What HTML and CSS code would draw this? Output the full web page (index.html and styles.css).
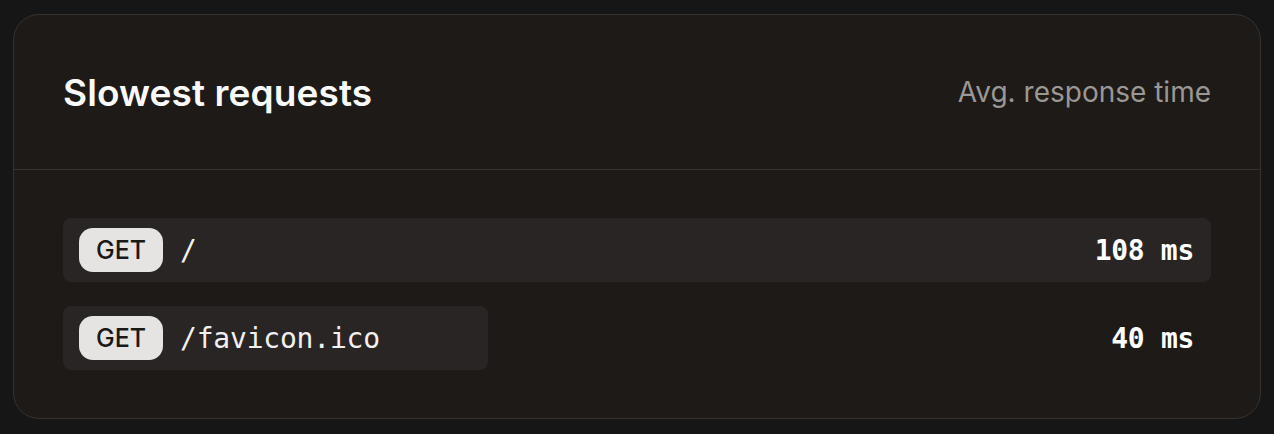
FILE: index.html
```html
<!DOCTYPE html>
<html lang="en">
<head>
<meta charset="utf-8">
<title>Slowest requests</title>
<link rel="stylesheet" href="styles.css">
</head>
<body>
<section class="card">
  <header class="card-header">
    <h2 class="title">Slowest requests</h2>
    <span class="subtitle">Avg. response time</span>
  </header>
  <div class="card-body">
    <div class="row">
      <div class="bar" style="width:100%"></div>
      <div class="row-main">
        <span class="method">GET</span>
        <span class="path">/</span>
      </div>
      <span class="value">108 ms</span>
    </div>
    <div class="row">
      <div class="bar" style="width:37.04%"></div>
      <div class="row-main">
        <span class="method">GET</span>
        <span class="path">/favicon.ico</span>
      </div>
      <span class="value">40 ms</span>
    </div>
  </div>
</section>
</body>
</html>
```
FILE: styles.css
```css
html, body {
  margin: 0;
  background: #161616;
}
body {
  padding: 14px 13px;
  font-family: Inter, "Noto Sans", sans-serif;
}
.card {
  background: #1d1a17;
  border: 1px solid #363230;
  border-radius: 26px;
  overflow: hidden;
}
.card-header {
  height: 154px;
  display: flex;
  align-items: center;
  justify-content: space-between;
  padding: 0 49px;
  border-bottom: 1px solid #363230;
}
.title {
  margin: 0;
  color: #fafafa;
  font-size: 37px;
  font-weight: 600;
  letter-spacing: 0.1px;
}
.subtitle {
  color: #9b9794;
  font-size: 28px;
  font-weight: 400;
}
.card-body {
  padding: 48px 49px 48px;
  display: flex;
  flex-direction: column;
  gap: 24px;
}
.row {
  position: relative;
  height: 64px;
  display: flex;
  align-items: center;
  justify-content: space-between;
  padding: 0 17px 0 16px;
}
.bar {
  position: absolute;
  left: 0;
  top: 0;
  bottom: 0;
  background: #282524;
  border-radius: 8px;
}
.row-main {
  position: relative;
  display: flex;
  align-items: center;
  gap: 17px;
}
.method {
  display: flex;
  align-items: center;
  justify-content: center;
  width: 84px;
  height: 44px;
  box-sizing: border-box;
  border-radius: 14px;
  background: #e5e4e2;
  color: #1b1918;
  font-size: 25px;
  font-weight: 500;
}
.path {
  color: #f2f0ee;
  font-family: "DejaVu Sans Mono", "Liberation Mono", monospace;
  font-size: 28px;
  letter-spacing: -0.2px;
}
.value {
  position: relative;
  color: #ffffff;
  font-family: "DejaVu Sans Mono", "Liberation Mono", monospace;
  font-size: 28px;
  font-weight: 700;
  letter-spacing: -0.3px;
}
```
